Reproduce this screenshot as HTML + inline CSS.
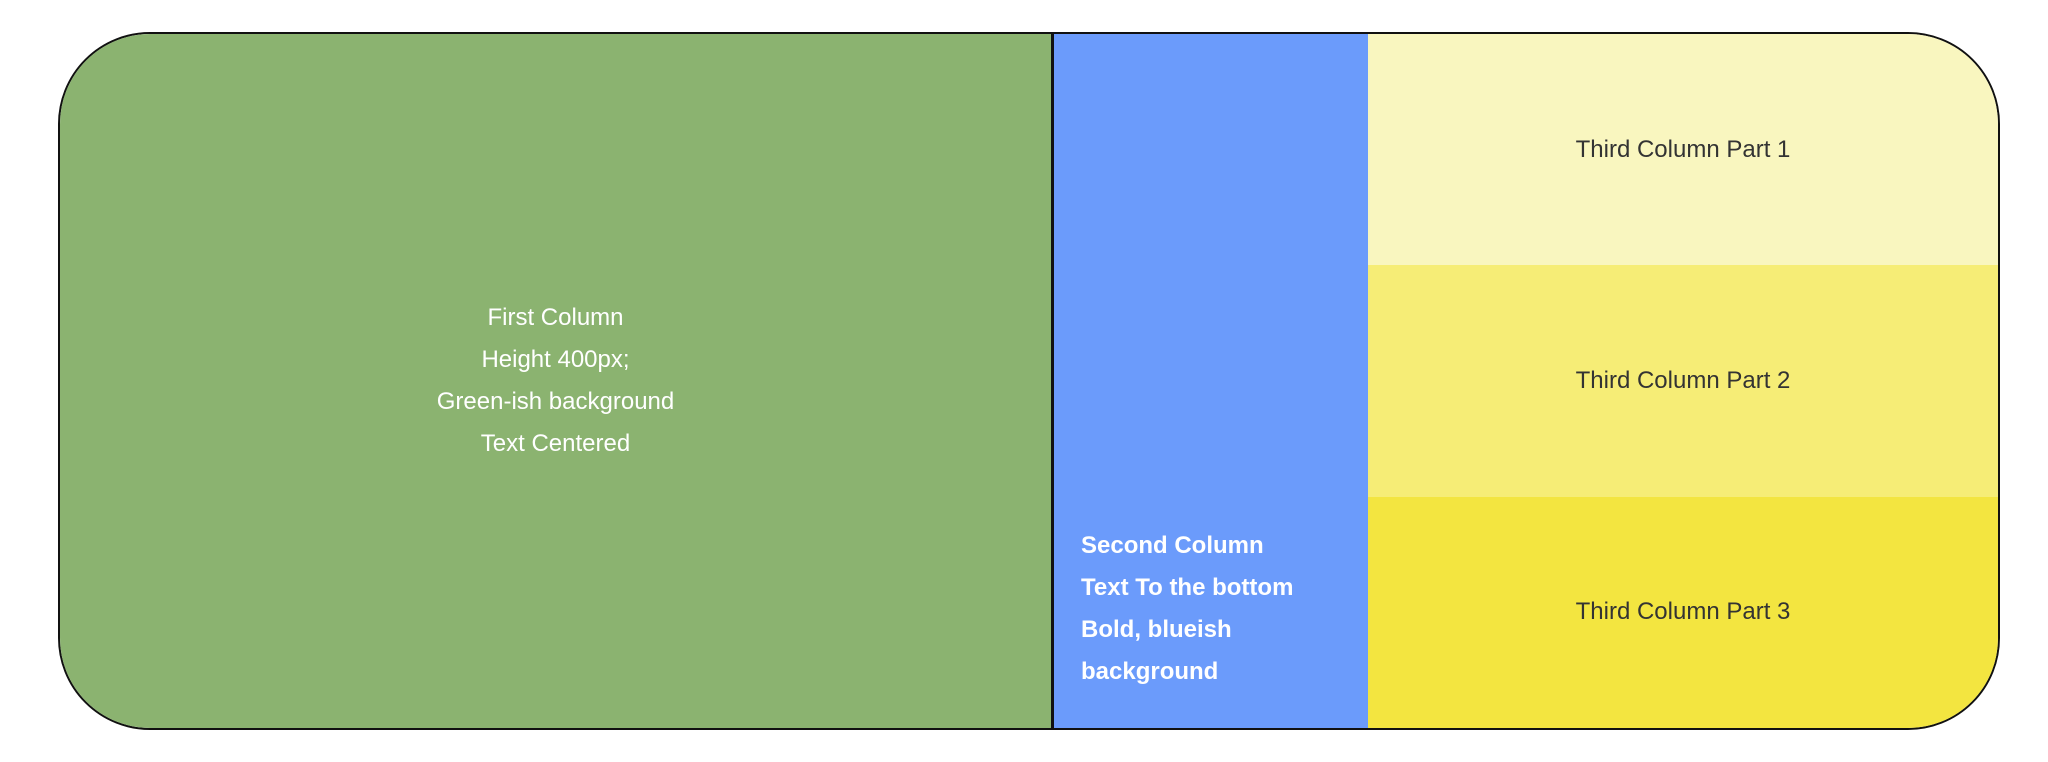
<!DOCTYPE html>
<html><head><style>
html,body{margin:0;padding:0;background:#fff;width:2048px;height:762px;overflow:hidden}
.box{position:absolute;left:58px;top:32px;width:1938px;height:694px;border:2px solid #111;border-radius:92px;overflow:hidden;display:flex;font-family:"Liberation Sans",sans-serif}
.c1{width:991px;background:#8bb370;color:#fff;display:flex;align-items:center;justify-content:center;text-align:center;font-size:24px;line-height:42px;border-right:3px solid #111}
.c2{width:314px;background:#6b9bfb;color:#fff;font-weight:bold;font-size:24px;line-height:42px;display:flex;align-items:flex-end;padding:0 0 35px 27px;box-sizing:border-box}
.c3{flex:1;display:flex;flex-direction:column}
.c3 div{flex:1;display:flex;align-items:center;justify-content:center;color:#333;font-size:24px}
</style></head><body>
<div class="box">
<div class="c1"><div>First Column<br>Height 400px;<br>Green-ish background<br>Text Centered</div></div>
<div class="c2"><div>Second Column<br>Text To the bottom<br>Bold, blueish<br>background</div></div>
<div class="c3"><div style="background:#f9f6bf">Third Column Part 1</div><div style="background:#f6ed76">Third Column Part 2</div><div style="background:#f3e540">Third Column Part 3</div></div>
</div>
</body></html>
